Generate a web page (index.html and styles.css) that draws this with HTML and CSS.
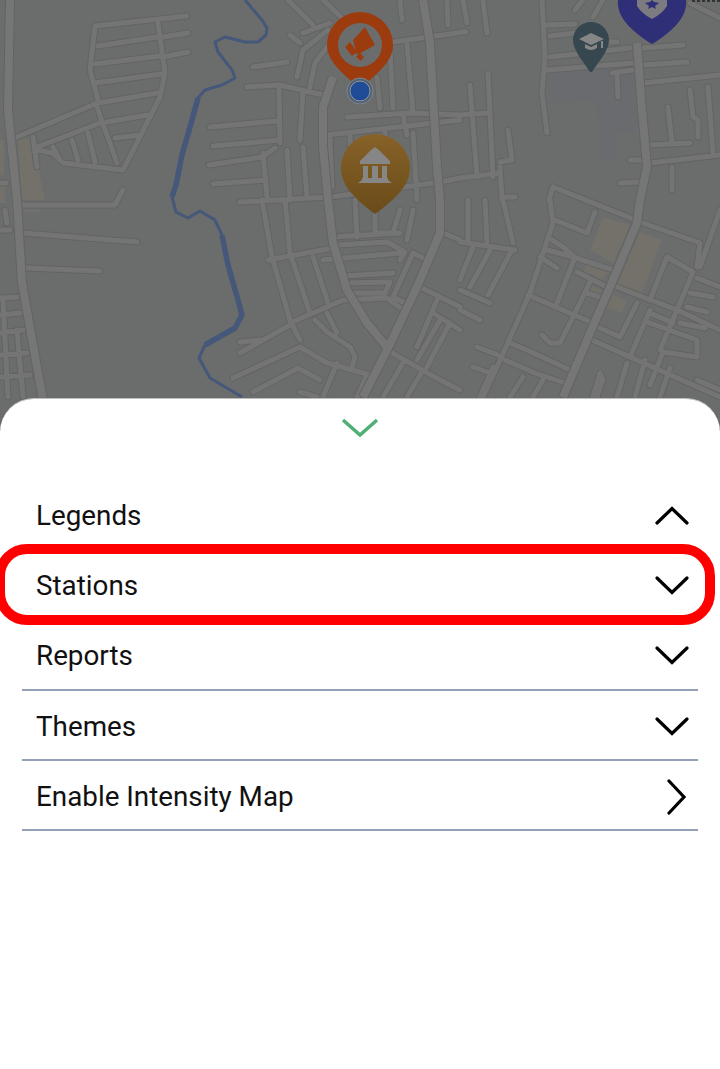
FILE: index.html
```html
<!DOCTYPE html>
<html lang="en">
<head>
<meta charset="utf-8">
<title>Map menu</title>
<link rel="stylesheet" href="styles.css">
</head>
<body>
<div class="app">
  <div class="map">
    <svg class="map-svg" width="720" height="420" viewBox="0 0 720 420" xmlns="http://www.w3.org/2000/svg" xmlns:xlink="http://www.w3.org/1999/xlink">
      <defs>
        <linearGradient id="gold" x1="0" y1="0" x2="0" y2="1">
          <stop offset="0" stop-color="#876229"/>
          <stop offset="1" stop-color="#6a4b18"/>
        </linearGradient>
        <path id="minor" d="M187 16L95 26L90 70L98 100M188 33L163 37M188 52L163 57M98 46L157 37M95 64L160 56M94 83L162 74M98 103L157 93M107 122L147 115M115 138L140 135M158 23L165 73L160 97L123 170L63 163L52 153L38 150M17 137L97 103M33 137L37 167M37 147L100 123M97 107L117 163M72 140L78 160M88 133L95 162M53 147L60 160M20 205H115L123 190M23 233L137 242M27 268L100 271M0 298L17 297M0 315L20 313M0 333L23 330M0 355L27 353M0 377L30 375M3 300L8 397M17 330L23 397M0 230H10M5 210L7 223M0 183H6M210 127L277 121M213 146L280 140M209 165L262 157L275 148M213 184L266 180M253 67L287 62M247 87L280 85L323 95M279 87L280 143M303 92L300 140M297 77L303 50L328 30M310 87L315 63L330 43M288 0L313 25M290 35L300 43M323 0L342 18M303 33L330 23M393 42L457 33M400 0L402 20M447 0L448 25M407 43L413 113M390 50L393 108M377 77L380 108M327 135L460 120M347 117L410 113L460 115M403 115L407 135M287 150L290 200M263 153L267 197M303 147L307 197M413 133L417 200M330 138L332 187M350 135L352 192M385 130L388 190M240 202L330 197L440 182L460 178M262 200L272 257L290 320L300 340M285 200L290 253L310 313M268 260L333 248M313 257L328 303M290 323L343 300L387 298L403 310M240 353L290 325M240 342L260 340M233 378L300 347L327 363L370 375M253 392L298 368L320 380M300 392L317 397M315 320L327 332L350 347L355 357L352 367M327 313L337 333M337 363L323 397M367 375L357 397M338 245L387 242L405 252L400 260M323 260L400 253M343 276L393 273M347 283L390 282L385 293L350 293M413 253L393 297L403 302M413 253L427 260M443 233L460 240M420 287L460 307M433 313L460 330M437 300L417 347M440 320L417 360M450 323L427 367M387 350L440 380L460 390M423 370L407 397M403 363L383 397M400 210L393 233L377 233M413 210L407 240M355 200L357 237M332 237L400 233M375 200V233M542 0L545 57L542 93L547 133M547 25L575 24M550 36L575 33M550 57L630 48M547 70L633 63M607 42L617 42M643 48L683 45M643 65L687 62M643 83L720 75M690 3L720 18M612 73L633 70M617 75L618 97M668 107L672 143M650 145L690 143M650 163L720 155M690 90L693 117L698 120L698 137M708 87L713 153M630 160L642 160M620 183L642 182M672 167L672 190M488 73L493 177M470 85L477 177M460 115L488 113M508 130L512 160L500 162M460 178L500 173M500 167L502 200M502 197L515 197M575 10L583 0M593 17L603 0M463 0L467 23M483 0L487 33M460 32H466M553 187L643 223L700 243M555 220L587 233L595 212M547 250L573 257L613 270M552 240L563 247L575 257M540 257L557 268M575 257L557 303M577 272L607 287M590 282L573 317M528 295L593 323M587 293L600 297M573 317L560 343H550L542 335M617 287L677 310L720 330M637 303L620 337L600 328M667 257L650 300M667 257L693 272M693 272L677 310L660 350M650 310L630 357M720 210L700 267M700 243L697 267M697 278L720 287M690 293L713 297M687 307L707 312M680 323L705 328M650 313L673 323M647 322L697 340V357L663 352L650 385M592 340L630 357L720 397M510 343L527 350L570 370M505 360L535 373L565 383M473 367L490 373M493 367L480 397M543 380L533 397M523 377L510 397M593 397L600 373L603 380L597 397M627 363L617 397M697 380L720 390M460 242L515 250M460 290L490 303M460 310L480 320M473 247L460 280M490 250L470 287M512 250L488 295M477 347L498 355M468 200V240M485 200L487 242M503 200L513 243M645 360L635 397M670 368L660 397"/>
        <path id="major" d="M10 0L8 110L17 200L22 283L37 367L43 400M423 0L430 43L437 167L440 200L440 233L417 287L387 350L363 397M333 77L323 107L323 147L328 200L333 243L347 290L367 323L387 347M637 43L642 110L647 167L640 200L637 223L613 280L590 333L563 397"/>
        <path id="mid" d="M550 200L553 223L530 293L497 367L483 397M553 187L549 200"/>
      </defs>
      <path class="patch-grey" d="M548 70L635 63L637 133H615V158L602 160L595 100L548 103Z"/>
      <path class="patch" d="M0 140H4V175H0ZM18 140L32 138L45 200H22ZM23 210H40V212H23ZM0 185H5V203H0ZM603 217L630 225L613 263L590 250ZM640 232L662 240L642 293L617 285ZM587 265L608 272L603 280L583 272ZM590 285L602 290L598 300L585 295ZM612 295L627 300L622 313L607 308Z"/>
      <use xlink:href="#minor" class="casing"/>
      <use xlink:href="#mid" class="casing"/>
      <use xlink:href="#minor" class="road"/>
      <use xlink:href="#mid" class="road"/>
      <use xlink:href="#major" class="casing-major"/>
      <use xlink:href="#major" class="road-major"/>
      <path class="river" d="M245 0L262 20L267 28L266 35L258 42L245 42L225 37L215 42L218 52L232 70L235 78L222 85L205 90L198 98"/>
      <path class="river-wide" d="M198 98L192 120L182 155L176 185L172 197"/>
      <path class="river" d="M172 197L176 212L188 218L200 211L215 220L222 235"/>
      <path class="river-wide" d="M222 235L228 265L238 300L242 315L235 328L205 345"/>
      <path class="river" d="M205 345L199 358L210 378L242 397"/>
      <path class="crumbs" d="M692 1H720"/>

      <path class="pin-orange" d="M360 12C378 12 393 27 393 45C393 60 380 72 360 88C340 72 327 60 327 45C327 27 342 12 360 12Z"/>
      <circle class="pin-hole" cx="360" cy="45" r="22"/>
      <path class="pin-orange" d="M353 40L365 27L375 45L357 55ZM345 47L350 42L357 52L352 56ZM356 57L360 53L364 57L361 61Z"/>
      <circle class="dot-ring" cx="360" cy="91" r="13"/>
      <circle class="dot" cx="360" cy="91" r="10"/>

      <path class="pin-gold" fill="url(#gold)" d="M375 134C394 134 410 149 410 168C410 186 395 199 375 214C355 199 341 186 341 168C341 149 356 134 375 134Z"/>
      <path class="icon-light" d="M375 147L380 151L390 161V164H360V161L370 151ZM363 166H368V178H363ZM372 166H378V178H372ZM382 166H387V178H382ZM362 178H388V180L392 183H358L362 180Z"/>

      <path class="pin-slate" d="M591 22C601 22 609 30 609 40C609 50 600 60 592 72H590C582 60 573 50 573 40C573 30 581 22 591 22Z"/>
      <path class="icon-light" d="M591 33L604 39L591 45L579 39ZM585 44L591 47L597 44V48Q591 52 585 48ZM601 41H603V48H601Z"/>

      <path class="pin-blue" d="M618 0H686C688 18 670 33 652 44C634 33 616 18 618 0Z"/>
      <path class="icon-shield" d="M637 0H667V6Q662 14 652 19Q642 14 637 6Z"/>
      <path class="pin-blue" d="M652 0L654 2L659 3L655 6L656 9L652 7L648 9L649 6L645 3L650 2Z"/>
    </svg>
  </div>
  <section class="sheet">
    <div class="handle">
      <svg class="handle-icon" width="40" height="20" viewBox="0 0 40 20" xmlns="http://www.w3.org/2000/svg"><path d="M3 3L20 18L37 3"/></svg>
    </div>
    <ul class="menu">
      <li class="row">
        <span class="label">Legends</span>
        <svg class="chev" width="36" height="20" viewBox="0 0 36 20" xmlns="http://www.w3.org/2000/svg"><path d="M3 17L18 2.500L33 17"/></svg>
      </li>
      <li class="row row-marked">
        <span class="label">Stations</span>
        <svg class="chev" width="36" height="20" viewBox="0 0 36 20" xmlns="http://www.w3.org/2000/svg"><path d="M3 2L18 16.500L33 2"/></svg>
      </li>
      <li class="row">
        <span class="label">Reports</span>
        <svg class="chev" width="36" height="20" viewBox="0 0 36 20" xmlns="http://www.w3.org/2000/svg"><path d="M3 2L18 16.500L33 2"/></svg>
      </li>
      <li class="row row-low">
        <span class="label">Themes</span>
        <svg class="chev" width="36" height="20" viewBox="0 0 36 20" xmlns="http://www.w3.org/2000/svg"><path d="M3 2L18 16.500L33 2"/></svg>
      </li>
      <li class="row row-low">
        <span class="label">Enable Intensity Map</span>
        <svg class="chev" width="36" height="36" viewBox="0 0 36 36" xmlns="http://www.w3.org/2000/svg"><path d="M15 2L30 18L15 34"/></svg>
      </li>
    </ul>
  </section>
</div>
</body>
</html>
```
FILE: styles.css
```css
* { box-sizing: border-box; }
html, body { margin: 0; padding: 0; }
body { background: #fff; font-family: Roboto, "Liberation Sans", sans-serif; }

.app {
  width: 720px;
  height: 1069px;
  overflow: hidden;
  background: #6b6d6d;
  display: flex;
  flex-direction: column;
}

.map { height: 398px; flex: none; }
.map-svg { display: block; }

.casing { fill: none; stroke: #626464; stroke-width: 7; stroke-linecap: round; stroke-linejoin: round; }
.road { fill: none; stroke: #747474; stroke-width: 5; stroke-linecap: round; stroke-linejoin: round; }
.casing-major { fill: none; stroke: #626464; stroke-width: 10; stroke-linejoin: round; }
.road-major { fill: none; stroke: #767676; stroke-width: 8; stroke-linejoin: round; }
.river { fill: none; stroke: #45587a; stroke-width: 3; stroke-linejoin: round; }
.river-wide { fill: none; stroke: #45587a; stroke-width: 5.500; stroke-linejoin: round; }
.crumbs { fill: none; stroke: #333; stroke-width: 2; stroke-dasharray: 3 2; }
.patch { fill: #73716a; }
.patch-grey { fill: #6a6b6f; }

.pin-orange { fill: #9c3b0d; }
.pin-hole { fill: #6b6d6d; }
.dot-ring { fill: #53606e; stroke: #7e8890; stroke-width: 1; }
.dot { fill: #1f4b97; stroke: #8a97a5; stroke-width: 1; }
.pin-slate { fill: #37474f; }
.pin-blue { fill: #2f2f78; }
.icon-light { fill: #868686; }
.icon-shield { fill: #7b7b80; }

.sheet {
  flex: 1;
  background: #fff;
  border-top: 1px solid #bdbdbd;
  border-radius: 34px 34px 0 0;
  display: flex;
  flex-direction: column;
}

.handle {
  height: 82px;
  flex: none;
  display: flex;
  justify-content: center;
  align-items: flex-start;
  padding-top: 18px;
}
.handle-icon path { fill: none; stroke: #4fb077; stroke-width: 3.500; }

.menu {
  list-style: none;
  margin: 0 22px;
  padding: 0;
}

.row {
  position: relative;
  height: 70px;
  display: flex;
  align-items: center;
  justify-content: space-between;
  padding: 2px 8px 0 14px;
  border-bottom: 2px solid #94a1b8;
}

.row-low { padding-top: 4px; }

.row-marked::after {
  content: "";
  box-sizing: border-box;
  position: absolute;
  left: -27px;
  right: -17px;
  top: -7px;
  height: 81px;
  border: 10px solid #ff0000;
  border-radius: 32px;
}

.label { font-size: 27.800px; color: #111; line-height: 1; }

.chev { flex: none; }
.chev path { fill: none; stroke: #000; stroke-width: 3.200; stroke-linecap: round; stroke-linejoin: miter; }
```
